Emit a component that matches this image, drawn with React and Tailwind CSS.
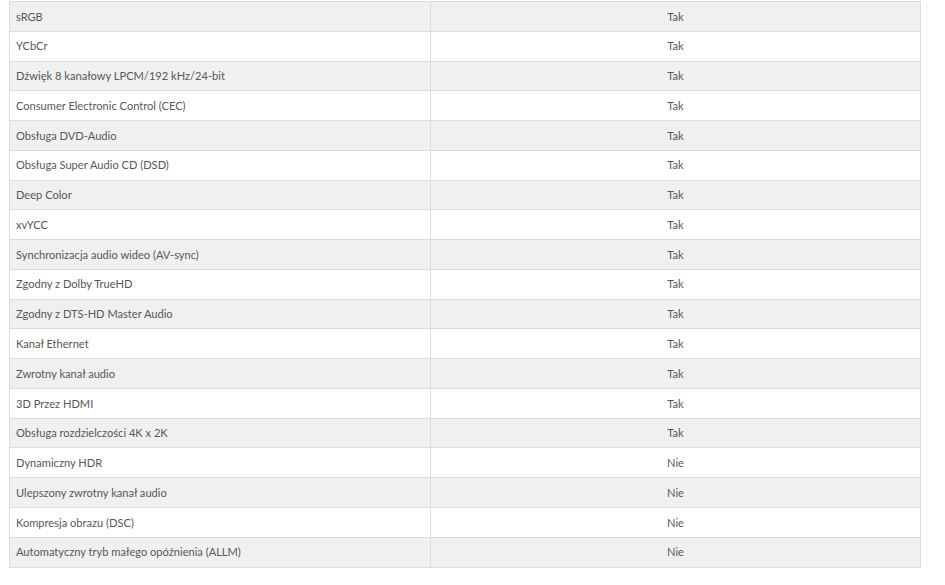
const rows = [
  ['sRGB', 'Tak'],
  ['YCbCr', 'Tak'],
  ['Dźwięk 8 kanałowy LPCM/192 kHz/24-bit', 'Tak'],
  ['Consumer Electronic Control (CEC)', 'Tak'],
  ['Obsługa DVD-Audio', 'Tak'],
  ['Obsługa Super Audio CD (DSD)', 'Tak'],
  ['Deep Color', 'Tak'],
  ['xvYCC', 'Tak'],
  ['Synchronizacja audio wideo (AV-sync)', 'Tak'],
  ['Zgodny z Dolby TrueHD', 'Tak'],
  ['Zgodny z DTS-HD Master Audio', 'Tak'],
  ['Kanał Ethernet', 'Tak'],
  ['Zwrotny kanał audio', 'Tak'],
  ['3D Przez HDMI', 'Tak'],
  ['Obsługa rozdzielczości 4K x 2K', 'Tak'],
  ['Dynamiczny HDR', 'Nie'],
  ['Ulepszony zwrotny kanał audio', 'Nie'],
  ['Kompresja obrazu (DSC)', 'Nie'],
  ['Automatyczny tryb małego opóźnienia (ALLM)', 'Nie'],
];

export default function App() {
  return (
    <div className="w-[945px] h-[585px] bg-white overflow-hidden font-['Lato','Open_Sans',sans-serif]">
      <div className="pl-[9px] pt-[1px]">
        <div className="w-[918px] border-r border-[#f0f0f0] pr-[5px]">
          <table className="w-[912px] border-collapse text-[11.1px] text-[#585858]">
            <tbody>
              {rows.map(([label, value], i) => (
                <tr key={label} className={i % 2 === 0 ? 'bg-[#f0f0f0]' : 'bg-white'}>
                  <td className="h-[29.78px] w-[421px] border border-[#dcdcdc] pl-[6px] pt-[1px] align-middle">
                    {label}
                  </td>
                  <td className="h-[29.78px] border border-[#dcdcdc] text-center align-middle pt-[1px]">
                    {value}
                  </td>
                </tr>
              ))}
            </tbody>
          </table>
        </div>
      </div>
    </div>
  );
}
